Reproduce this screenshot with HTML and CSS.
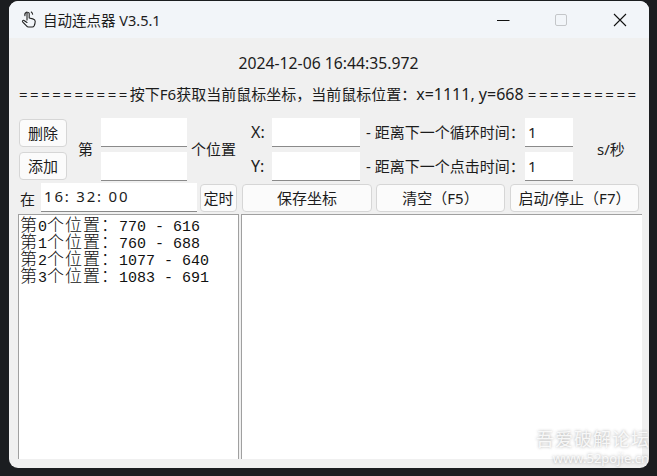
FILE: index.html
```html
<!DOCTYPE html>
<html lang="zh">
<head>
<meta charset="utf-8">
<title>自动连点器 V3.5.1</title>
<link rel="stylesheet" href="styles.css">
</head>
<body>
<div class="window">
  <header class="titlebar">
    <svg class="app-icon" width="16" height="18" viewBox="0 0 16 18" fill="none" stroke="#222" stroke-width="1.1" stroke-linejoin="round" stroke-linecap="round">
      <path d="M6 9V2.6a1.1 1.1 0 0 1 2.2 0V7l3.6.9c1.4.4 2.4 1 2.4 2.4 0 1.500-.3 2.900-1 4.400-.4.800-1 1.300-2 1.300H7.500c-.9 0-1.500-.4-2-1.100L1.600 10.800c-.6-.9.500-1.900 1.400-1.300L6 11.500"/>
      <path d="M3.900 4.700A3.200 3.200 0 0 1 6 1M10.300 1a3.200 3.200 0 0 1 1.300 2.200"/>
    </svg>
    <span class="app-title">自动连点器 V3.5.1</span>
    <div class="winbtns">
      <span class="winbtn"><svg width="14" height="14" viewBox="0 0 14 14"><path d="M1 7.500H13.500" stroke="#111" stroke-width="1.200"/></svg></span>
      <span class="winbtn"><svg width="14" height="14" viewBox="0 0 14 14"><rect x="1.500" y="1.500" width="11" height="11" rx="1.500" fill="none" stroke="#c4c6c9" stroke-width="1"/></svg></span>
      <span class="winbtn"><svg width="14" height="14" viewBox="0 0 14 14"><path d="M1 1L13 13M13 1L1 13" stroke="#111" stroke-width="1.100"/></svg></span>
    </div>
  </header>
  <main class="content">
    <div class="clock">2024-12-06 16:44:35.972</div>
    <div class="hint"><span class="eq">==========</span>按下F6获取当前鼠标坐标，当前鼠标位置：<span class="lat">x=1111, y=668 </span><span class="eq">==========</span></div>
    <section class="form">
      <div class="stack">
        <button class="btn small">删除</button>
        <button class="btn small">添加</button>
      </div>
      <span class="lbl di">第</span>
      <div class="stack">
        <div class="field idx"></div>
        <div class="field idx"></div>
      </div>
      <span class="lbl pos">个位置</span>
      <div class="coords">
        <div class="coord"><span class="lbl axis">X:</span><div class="field xy"></div><span class="lbl dist">- 距离下一个循环时间：</span><div class="field num">1</div></div>
        <div class="coord"><span class="lbl axis">Y:</span><div class="field xy"></div><span class="lbl dist">- 距离下一个点击时间：</span><div class="field num">1</div></div>
      </div>
      <span class="lbl unit">s/秒</span>
    </section>
    <section class="actions">
      <span class="lbl at">在</span>
      <div class="field time">16: 32: 00</div>
      <button class="btn timer">定时</button>
      <button class="btn save">保存坐标</button>
      <button class="btn clear">清空（F5）</button>
      <button class="btn start">启动/停止（F7）</button>
    </section>
    <section class="lists">
      <div class="list left">
        <div><span class="cjk">第</span>0<span class="cjk">个位置：</span>770 - 616</div>
        <div><span class="cjk">第</span>1<span class="cjk">个位置：</span>760 - 688</div>
        <div><span class="cjk">第</span>2<span class="cjk">个位置：</span>1077 - 640</div>
        <div><span class="cjk">第</span>3<span class="cjk">个位置：</span>1083 - 691</div>
      </div>
      <div class="list right"></div>
    </section>
  </main>
  <div class="watermark">
    <div class="wm-cn">吾爱破解论坛</div>
    <div class="wm-en">www.52pojie.cn</div>
  </div>
</div>
</body>
</html>
```
FILE: styles.css
```css
* { box-sizing: border-box; }
html, body { margin: 0; height: 100%; }
body {
  background: #1b1d20;
  padding: 1px 8px 8px 9px;
  overflow: hidden;
  font-family: "Noto Sans", "Noto Sans CJK SC", sans-serif;
  color: #1c1c1c;
}
.window {
  position: relative;
  height: 467px;
  background: #f0f0f0;
  border-radius: 9px;
  display: flex;
  flex-direction: column;
  overflow: hidden;
}
.titlebar {
  height: 37px;
  flex: none;
  background: #f2f5f9;
  display: flex;
  align-items: center;
  padding-left: 12px;
}
.app-icon { flex: none; margin-top: 1px; }
.app-title { margin-left: 6px; font-size: 14.500px; line-height: 18px; }
.winbtns { margin-left: auto; display: flex; margin-right: 0; }
.winbtn { width: 58.500px; display: flex; justify-content: center; }
.content { flex: 1; display: flex; flex-direction: column; padding: 0 7px 0 9px; min-height: 0; }
.clock { margin-top: 16px; height: 18px; line-height: 18px; text-align: center; font-size: 15.750px; padding-right: 3px; }
.hint { margin-top: 13px; height: 18px; line-height: 18px; font-size: 15px; white-space: pre; padding-left: 1px; }
.eq { letter-spacing: 2.500px; font-size: 15px; }
.lat { font-size: 16px; }
.form { margin-top: 15px; height: 62px; display: flex; align-items: center; font-size: 15px; padding-left: 1px; }
.stack { display: flex; flex-direction: column; gap: 5px; }
.coords { display: flex; flex-direction: column; gap: 5px; }
.coord { display: flex; align-items: center; }
.lbl { white-space: nowrap; line-height: 20px; }
.btn {
  font: inherit;
  font-size: 15px;
  line-height: 18px;
  color: #1c1c1c;
  background: #fbfbfb;
  border: 1px solid #d6d6d6;
  border-radius: 4px;
  padding: 0;
  white-space: nowrap;
}
.btn.small { width: 48px; height: 28px; display: block; }
.field {
  background: #fff;
  border-bottom: 1px solid #8a8a8a;
  height: 29px;
  line-height: 28px;
  font-size: 15px;
}
.di { margin-left: 11px; width: 23px; }
.field.idx { width: 86px; }
.pos { margin-left: 4px; width: 60px; }
.axis { width: 21px; font-size: 16px; }
.field.xy { width: 88px; }
.dist { margin-left: 6px; width: 159px; }
.field.num { width: 48px; padding-left: 3px; }
.unit { margin-left: 24px; }
.actions { margin-top: 3px; height: 30px; display: flex; align-items: stretch; font-size: 15px; }
.at { width: 22px; margin-left: 2px; line-height: 32px; margin-right: -1px; }
.field.time { width: 156px; height: 29px; padding-left: 3px; letter-spacing: 1.800px; line-height: 27px; }
.btn.timer { width: 37px; height: 28px; margin-left: 3px; margin-top: 1px; }
.btn.save { width: 130px; height: 28px; margin-top: 1px; margin-left: 5px; }
.btn.clear { width: 129px; height: 28px; margin-top: 1px; margin-left: 4px; }
.btn.start { width: 129px; height: 28px; margin-top: 1px; margin-left: 5px; }
.lists { margin-top: 1px; height: 245px; display: flex; gap: 2px; }
.list { background: #fff; border-top: 1px solid #a0a0a0; border-left: 1px solid #a0a0a0; }
.list.left {
  width: 221px;
  border-right: 1px solid #a0a0a0;
  font-family: "Liberation Mono", "Noto Sans CJK SC", monospace;
  font-size: 15px;
  line-height: 17px;
  padding: 4px 0 0 1px;
  color: #111;
  white-space: nowrap;
}
.cjk { font-family: "Noto Sans CJK SC", sans-serif; font-size: 17px; font-weight: 300; line-height: 0; letter-spacing: 1px; }
.list.right { width: 402px; }
.watermark {
  position: absolute;
  right: 0;
  bottom: 2px;
  width: 113px;
  color: rgba(255, 255, 255, 0.85);
  text-shadow: 0 0 3px rgba(60, 60, 60, 0.45);
  text-align: right;
  white-space: nowrap;
}
.wm-cn { font-size: 18px; line-height: 20px; letter-spacing: 1px; }
.wm-en { font-size: 13px; line-height: 16px; margin-top: 1px; }
```
